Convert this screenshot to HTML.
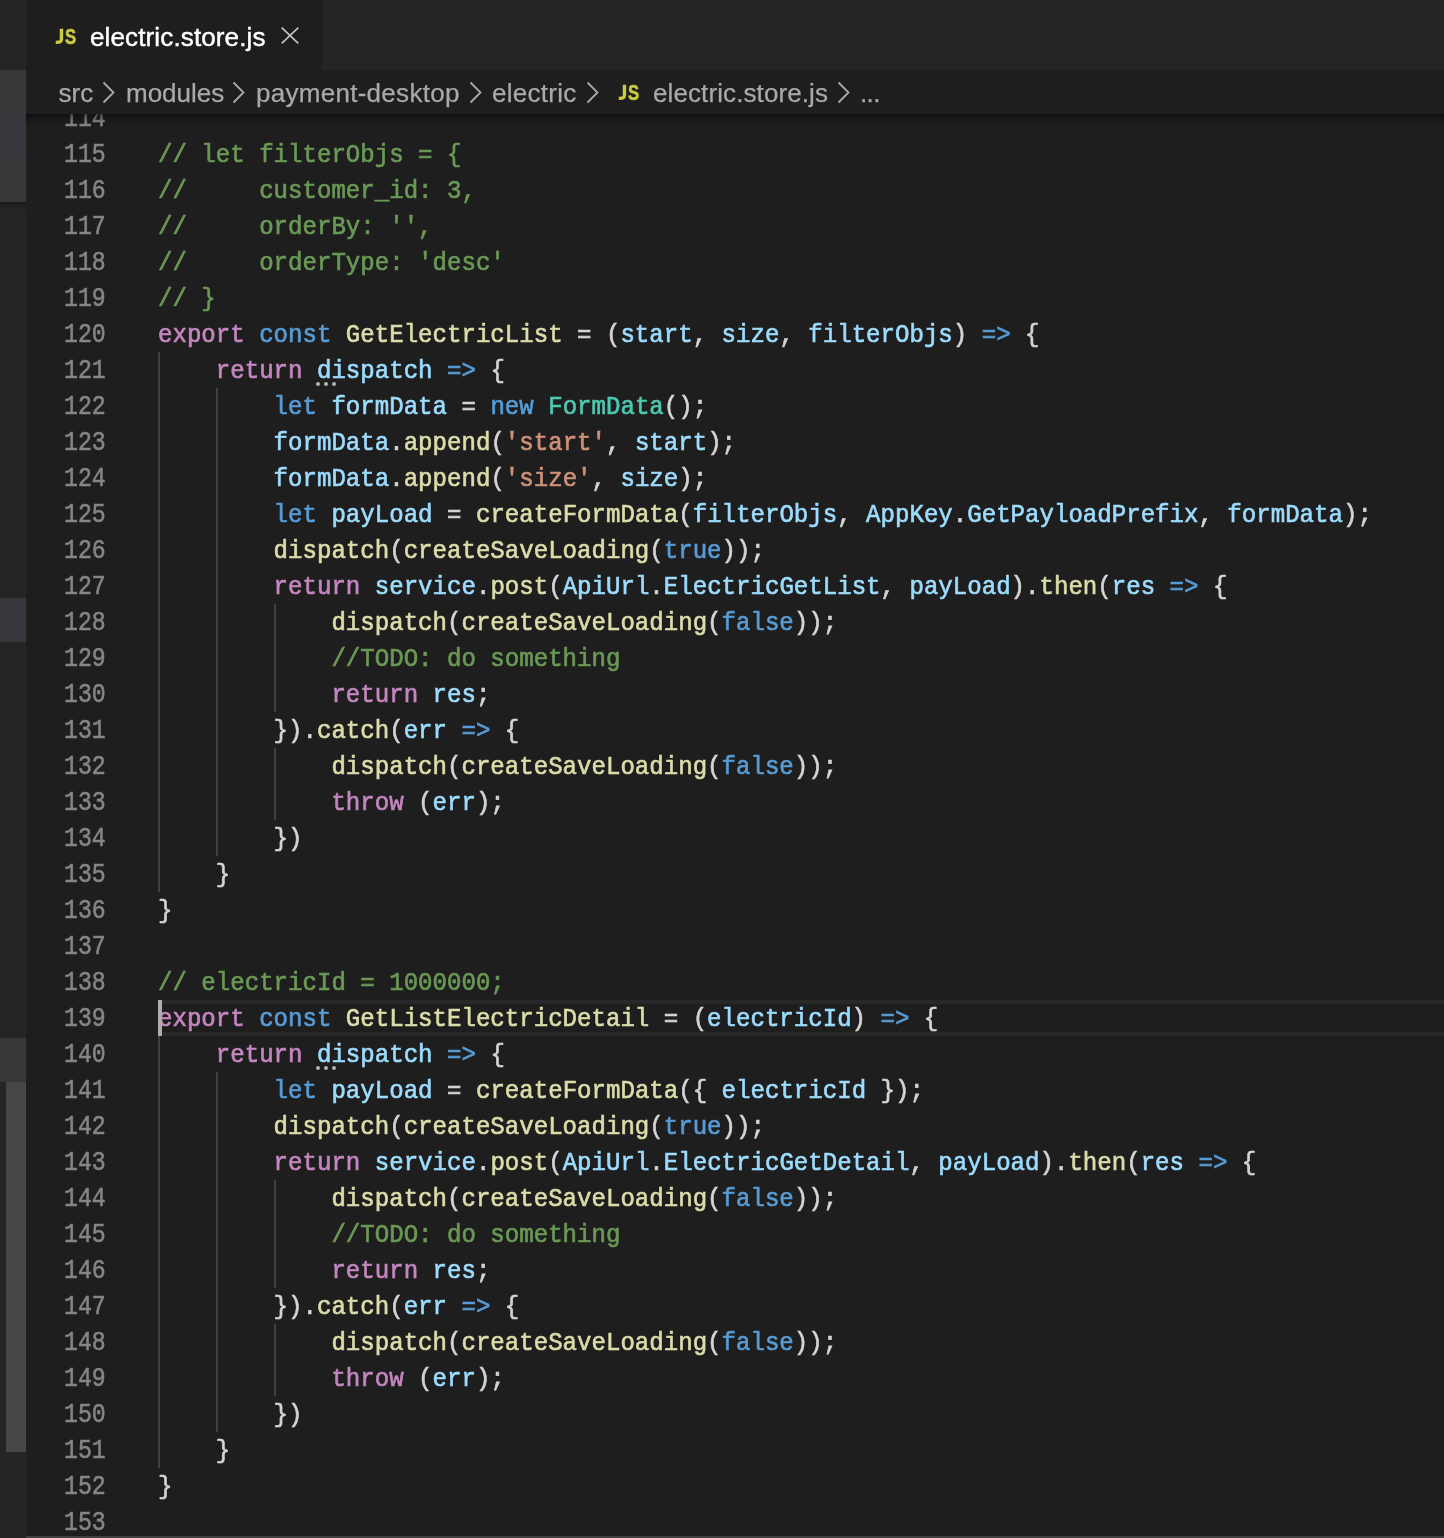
<!DOCTYPE html>
<html lang="en">
<head>
<meta charset="utf-8">
<title>electric.store.js</title>
<style>
html,body{margin:0;padding:0;}
body{width:1444px;height:1538px;overflow:hidden;background:#1e1e1e;position:relative;font-family:"Liberation Sans",sans-serif;}
.abs{position:absolute;}
/* left sidebar strip */
.side{position:absolute;left:0;top:0;width:26px;height:1538px;background:#252526;}
.side div{position:absolute;left:0;width:26px;}
/* tab bar */
.tabbar{will-change:transform;position:absolute;left:26px;top:0;width:1418px;height:70px;background:#252526;}
.tab{position:absolute;left:0;top:0;width:296px;height:70px;background:#1e1e1e;}
.tab .js{position:absolute;left:29px;top:2px;line-height:70px;}
.js{font-family:"Liberation Sans",sans-serif;font-weight:bold;color:#cbcb41;font-size:21px;letter-spacing:0;transform:scaleX(0.8);transform-origin:0 50%;}
.tab .title{position:absolute;left:64px;top:1.5px;-webkit-text-stroke:0.45px currentColor;line-height:70px;font-size:26px;letter-spacing:0.13px;color:#ffffff;white-space:pre;}
.tab svg.close{position:absolute;left:255px;top:27px;}
/* breadcrumbs */
.crumbs{will-change:transform;position:absolute;left:26px;top:70px;width:1418px;height:44px;background:#1e1e1e;color:#a9a9a9;font-size:26px;letter-spacing:0px;white-space:pre;}
.crumbs span{position:absolute;top:1px;line-height:44px;-webkit-text-stroke:0.25px currentColor;}
.crumbs span.js{top:2px;-webkit-text-stroke:0;}
.crumbs svg{position:absolute;top:11px;}
.crumbs svg.jsi{top:13.7px;}
/* editor */
.editor{will-change:transform;position:absolute;left:26px;top:114px;width:1418px;height:1424px;overflow:hidden;background:#1e1e1e;}
.editor>*{margin-left:-26px;margin-top:-114px;}
.ln{position:absolute;left:0;width:105.8px;transform-origin:100% 24.4px;transform:translateY(1.8px) scale(0.965,1.135);-webkit-text-stroke:0.5px currentColor;height:36px;line-height:36px;text-align:right;color:#858585;font-family:"Liberation Mono",monospace;font-size:24.08px;white-space:pre;}
.cl{position:absolute;left:158px;transform-origin:0 24.4px;transform:translateY(1.6px) scaleY(1.07);-webkit-text-stroke:0.6px currentColor;height:36px;line-height:36px;color:#d4d4d4;font-family:"Liberation Mono",monospace;font-size:24.08px;white-space:pre;}
.c{color:#6a9955}.k{color:#c586c0}.s{color:#569cd6}.v{color:#9cdcfe}.f{color:#dcdcaa}.t{color:#4ec9b0}.q{color:#ce9178}
.guide{position:absolute;width:2px;background:#404040;}
.curline{position:absolute;left:158px;width:1286px;height:28px;border-top:4px solid #282828;border-bottom:4px solid #282828;}
.cursor{position:absolute;left:158px;width:4px;height:36px;background:#aeafad;}
.hint{position:absolute;fill:#b4b4b4;}
.shadow{position:absolute;left:26px;top:114px;width:1418px;height:12px;box-shadow:#000 0 12px 12px -12px inset;}
.botline{position:absolute;left:26px;top:1536px;width:1418px;height:2px;background:#414141;}
.jsi{position:absolute;overflow:visible;}

</style>
</head>
<body>
<div class="side">
  <div style="top:70px;height:132px;background:#383838"></div>
  <div style="top:114px;height:44px;background:#37373d"></div>
  <div style="top:202px;height:7px;background:linear-gradient(rgba(0,0,0,.35),rgba(0,0,0,0))"></div>
  <div style="top:598px;height:44px;background:#37373d"></div>
  <div style="top:1038px;height:44px;background:#383838"></div>
  <div style="left:6px;width:20px;top:1082px;height:370px;background:#474747"></div>
</div>
<div class="tabbar">
  <div class="tab">
    <svg class="jsi" style="left:29px;top:28px" width="24" height="20" viewBox="0 0 24 20"><path d="M6.45 0.7 V11 C6.45 14 4.5 14.5 0.8 14.3" stroke="#cbcb41" stroke-width="3.4" fill="none"/><text x="0" y="16.1" transform="translate(9.9 0) scale(0.76 1)" font-family="Liberation Sans, sans-serif" font-weight="bold" font-size="22" fill="#cbcb41" stroke="#cbcb41" stroke-width="0.5">S</text></svg>
    <span class="title">electric.store.js</span>
    <svg class="close" width="18" height="17" viewBox="0 0 18 17"><path d="M0.7 0.7 L17.3 16.3 M17.3 0.7 L0.7 16.3" stroke="#c5c5c5" stroke-width="1.6" fill="none"/></svg>
  </div>
</div>
<div class="crumbs">
  <span style="left:32.6px">src</span>
  <span style="left:100px">modules</span>
  <span style="left:230px;letter-spacing:0.28px">payment-desktop</span>
  <span style="left:466px;letter-spacing:0.28px">electric</span>
  <svg class="jsi" style="left:591.5px;top:13.7px" width="24" height="20" viewBox="0 0 24 20"><path d="M6.45 0.7 V11 C6.45 14 4.5 14.5 0.8 14.3" stroke="#cbcb41" stroke-width="3.4" fill="none"/><text x="0" y="16.1" transform="translate(9.9 0) scale(0.76 1)" font-family="Liberation Sans, sans-serif" font-weight="bold" font-size="22" fill="#cbcb41" stroke="#cbcb41" stroke-width="0.5">S</text></svg>
  <span style="left:627px;letter-spacing:0.1px">electric.store.js</span>
  <span style="left:834px;letter-spacing:-0.6px">...</span>
  <svg style="left:76px" width="14" height="24" viewBox="0 0 14 24"><path d="M1.5 1.5 L11.5 11.5 L1.5 21.5" stroke="#a9a9a9" stroke-width="1.8" fill="none"/></svg>
  <svg style="left:206.4px" width="14" height="24" viewBox="0 0 14 24"><path d="M1.5 1.5 L11.5 11.5 L1.5 21.5" stroke="#a9a9a9" stroke-width="1.8" fill="none"/></svg>
  <svg style="left:443.2px" width="14" height="24" viewBox="0 0 14 24"><path d="M1.5 1.5 L11.5 11.5 L1.5 21.5" stroke="#a9a9a9" stroke-width="1.8" fill="none"/></svg>
  <svg style="left:560.2px" width="14" height="24" viewBox="0 0 14 24"><path d="M1.5 1.5 L11.5 11.5 L1.5 21.5" stroke="#a9a9a9" stroke-width="1.8" fill="none"/></svg>
  <svg style="left:810.9px" width="14" height="24" viewBox="0 0 14 24"><path d="M1.5 1.5 L11.5 11.5 L1.5 21.5" stroke="#a9a9a9" stroke-width="1.8" fill="none"/></svg>
</div>

<div class="editor">
<div class="curline" style="top:1000px"></div>
<div class="guide" style="left:158.0px;top:352px;height:540px"></div>
<div class="guide" style="left:215.8px;top:388px;height:468px"></div>
<div class="guide" style="left:273.6px;top:604px;height:108px"></div>
<div class="guide" style="left:273.6px;top:748px;height:72px"></div>
<div class="guide" style="left:158.0px;top:1036px;height:432px"></div>
<div class="guide" style="left:215.8px;top:1072px;height:360px"></div>
<div class="guide" style="left:273.6px;top:1180px;height:108px"></div>
<div class="guide" style="left:273.6px;top:1324px;height:72px"></div>
<svg class="hint" style="left:316px;top:382px" width="24" height="6" viewBox="0 0 24 6"><circle cx="2" cy="2" r="2"/><circle cx="10" cy="2" r="2"/><circle cx="18" cy="2" r="2"/></svg>
<svg class="hint" style="left:316px;top:1066px" width="24" height="6" viewBox="0 0 24 6"><circle cx="2" cy="2" r="2"/><circle cx="10" cy="2" r="2"/><circle cx="18" cy="2" r="2"/></svg>
<div class="ln" style="top:100px">114</div>
<div class="ln" style="top:136px">115</div>
<div class="cl" style="top:136px"><span class="c">// let filterObjs = {</span></div>
<div class="ln" style="top:172px">116</div>
<div class="cl" style="top:172px"><span class="c">//     customer_id: 3,</span></div>
<div class="ln" style="top:208px">117</div>
<div class="cl" style="top:208px"><span class="c">//     orderBy: '',</span></div>
<div class="ln" style="top:244px">118</div>
<div class="cl" style="top:244px"><span class="c">//     orderType: 'desc'</span></div>
<div class="ln" style="top:280px">119</div>
<div class="cl" style="top:280px"><span class="c">// }</span></div>
<div class="ln" style="top:316px">120</div>
<div class="cl" style="top:316px"><span class="k">export</span> <span class="s">const</span> <span class="f">GetElectricList</span> = (<span class="v">start</span>, <span class="v">size</span>, <span class="v">filterObjs</span>) <span class="s">=&gt;</span> {</div>
<div class="ln" style="top:352px">121</div>
<div class="cl" style="top:352px">    <span class="k">return</span> <span class="v">dispatch</span> <span class="s">=&gt;</span> {</div>
<div class="ln" style="top:388px">122</div>
<div class="cl" style="top:388px">        <span class="s">let</span> <span class="v">formData</span> = <span class="s">new</span> <span class="t">FormData</span>();</div>
<div class="ln" style="top:424px">123</div>
<div class="cl" style="top:424px">        <span class="v">formData</span>.<span class="f">append</span>(<span class="q">'start'</span>, <span class="v">start</span>);</div>
<div class="ln" style="top:460px">124</div>
<div class="cl" style="top:460px">        <span class="v">formData</span>.<span class="f">append</span>(<span class="q">'size'</span>, <span class="v">size</span>);</div>
<div class="ln" style="top:496px">125</div>
<div class="cl" style="top:496px">        <span class="s">let</span> <span class="v">payLoad</span> = <span class="f">createFormData</span>(<span class="v">filterObjs</span>, <span class="v">AppKey</span>.<span class="v">GetPayloadPrefix</span>, <span class="v">formData</span>);</div>
<div class="ln" style="top:532px">126</div>
<div class="cl" style="top:532px">        <span class="f">dispatch</span>(<span class="f">createSaveLoading</span>(<span class="s">true</span>));</div>
<div class="ln" style="top:568px">127</div>
<div class="cl" style="top:568px">        <span class="k">return</span> <span class="v">service</span>.<span class="f">post</span>(<span class="v">ApiUrl</span>.<span class="v">ElectricGetList</span>, <span class="v">payLoad</span>).<span class="f">then</span>(<span class="v">res</span> <span class="s">=&gt;</span> {</div>
<div class="ln" style="top:604px">128</div>
<div class="cl" style="top:604px">            <span class="f">dispatch</span>(<span class="f">createSaveLoading</span>(<span class="s">false</span>));</div>
<div class="ln" style="top:640px">129</div>
<div class="cl" style="top:640px">            <span class="c">//TODO: do something</span></div>
<div class="ln" style="top:676px">130</div>
<div class="cl" style="top:676px">            <span class="k">return</span> <span class="v">res</span>;</div>
<div class="ln" style="top:712px">131</div>
<div class="cl" style="top:712px">        }).<span class="f">catch</span>(<span class="v">err</span> <span class="s">=&gt;</span> {</div>
<div class="ln" style="top:748px">132</div>
<div class="cl" style="top:748px">            <span class="f">dispatch</span>(<span class="f">createSaveLoading</span>(<span class="s">false</span>));</div>
<div class="ln" style="top:784px">133</div>
<div class="cl" style="top:784px">            <span class="k">throw</span> (<span class="v">err</span>);</div>
<div class="ln" style="top:820px">134</div>
<div class="cl" style="top:820px">        })</div>
<div class="ln" style="top:856px">135</div>
<div class="cl" style="top:856px">    }</div>
<div class="ln" style="top:892px">136</div>
<div class="cl" style="top:892px">}</div>
<div class="ln" style="top:928px">137</div>
<div class="ln" style="top:964px">138</div>
<div class="cl" style="top:964px"><span class="c">// electricId = 1000000;</span></div>
<div class="ln" style="top:1000px">139</div>
<div class="cl" style="top:1000px"><span class="k">export</span> <span class="s">const</span> <span class="f">GetListElectricDetail</span> = (<span class="v">electricId</span>) <span class="s">=&gt;</span> {</div>
<div class="ln" style="top:1036px">140</div>
<div class="cl" style="top:1036px">    <span class="k">return</span> <span class="v">dispatch</span> <span class="s">=&gt;</span> {</div>
<div class="ln" style="top:1072px">141</div>
<div class="cl" style="top:1072px">        <span class="s">let</span> <span class="v">payLoad</span> = <span class="f">createFormData</span>({ <span class="v">electricId</span> });</div>
<div class="ln" style="top:1108px">142</div>
<div class="cl" style="top:1108px">        <span class="f">dispatch</span>(<span class="f">createSaveLoading</span>(<span class="s">true</span>));</div>
<div class="ln" style="top:1144px">143</div>
<div class="cl" style="top:1144px">        <span class="k">return</span> <span class="v">service</span>.<span class="f">post</span>(<span class="v">ApiUrl</span>.<span class="v">ElectricGetDetail</span>, <span class="v">payLoad</span>).<span class="f">then</span>(<span class="v">res</span> <span class="s">=&gt;</span> {</div>
<div class="ln" style="top:1180px">144</div>
<div class="cl" style="top:1180px">            <span class="f">dispatch</span>(<span class="f">createSaveLoading</span>(<span class="s">false</span>));</div>
<div class="ln" style="top:1216px">145</div>
<div class="cl" style="top:1216px">            <span class="c">//TODO: do something</span></div>
<div class="ln" style="top:1252px">146</div>
<div class="cl" style="top:1252px">            <span class="k">return</span> <span class="v">res</span>;</div>
<div class="ln" style="top:1288px">147</div>
<div class="cl" style="top:1288px">        }).<span class="f">catch</span>(<span class="v">err</span> <span class="s">=&gt;</span> {</div>
<div class="ln" style="top:1324px">148</div>
<div class="cl" style="top:1324px">            <span class="f">dispatch</span>(<span class="f">createSaveLoading</span>(<span class="s">false</span>));</div>
<div class="ln" style="top:1360px">149</div>
<div class="cl" style="top:1360px">            <span class="k">throw</span> (<span class="v">err</span>);</div>
<div class="ln" style="top:1396px">150</div>
<div class="cl" style="top:1396px">        })</div>
<div class="ln" style="top:1432px">151</div>
<div class="cl" style="top:1432px">    }</div>
<div class="ln" style="top:1468px">152</div>
<div class="cl" style="top:1468px">}</div>
<div class="ln" style="top:1504px">153</div>
<div class="cursor" style="top:1000px"></div>
</div>
<div class="shadow"></div>
<div class="botline"></div>

</body>
</html>
